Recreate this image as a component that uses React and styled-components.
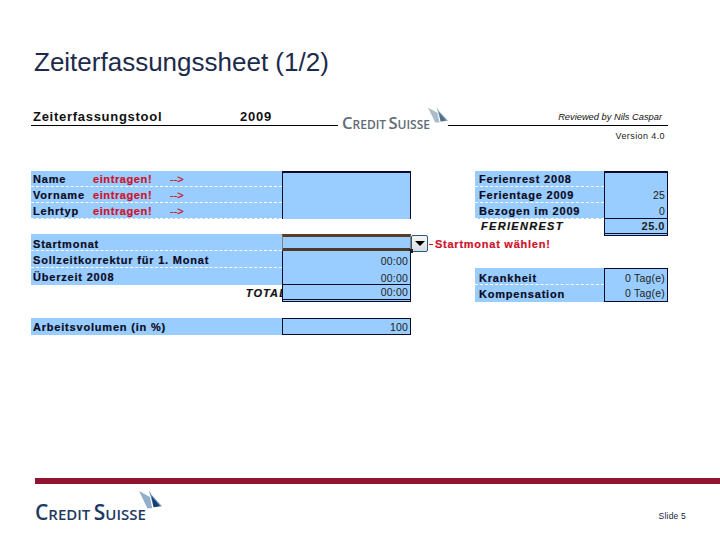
import React from 'react';
import styled, { createGlobalStyle } from 'styled-components';

const GlobalStyle = createGlobalStyle`
  html, body {
    margin: 0;
    padding: 0;
    background: #fff;
  }
`;

const Page = styled.div`
  width: 720px;
  height: 540px;
  overflow: hidden;
  display: flex;
  flex-direction: column;
  font-family: "Liberation Sans", Arial, sans-serif;
`;

const Title = styled.h1`
  margin: 0;
  padding: 48px 0 0 34px;
  height: 59px;
  box-sizing: content-box;
  font-size: 26px;
  line-height: 28px;
  font-weight: 400;
  color: #1c2b4a;
`;

const Sheet = styled.div`
  margin-left: 31px;
  width: 637px;
  height: 371px;
  display: flex;
  flex-direction: column;
`;

const SheetHeader = styled.div`
  height: 64px;
  display: flex;
  align-items: flex-start;
`;

const HeaderPart = styled.div`
  width: ${p => p.$width}px;
  height: 17px;
  border-bottom: 1px solid #000;
  display: flex;
  align-items: flex-end;
  padding: 0 ${p => p.$pad || 0}px 1px 2px;
  box-sizing: content-box;
`;

const ToolName = styled.span`
  font-size: 13px;
  font-weight: 700;
  line-height: 15px;
  letter-spacing: 0.72px;
  color: #111;
  width: 207px;
`;

const Year = styled.span`
  font-size: 13px;
  font-weight: 700;
  line-height: 15px;
  letter-spacing: 0.8px;
  color: #111;
`;

const HeaderRight = styled.div`
  margin-left: auto;
  width: 220px;
  display: flex;
  flex-direction: column;
  align-items: flex-end;
`;

const Reviewed = styled.div`
  width: 100%;
  box-sizing: border-box;
  height: 19px;
  border-bottom: 1px solid #000;
  padding: 4px 6px 0 0;
  text-align: right;
  font-size: 9.3px;
  line-height: 12px;
  font-style: italic;
  color: #111;
`;

const Version = styled.div`
  padding: 4px 3px 0 0;
  font-size: 9px;
  line-height: 12px;
  letter-spacing: 0.4px;
  color: #222;
`;

const LogoWrap = styled.div`
  position: relative;
  flex: none;
  box-sizing: border-box;
  width: ${p => p.$width}px;
  height: ${p => p.$height}px;
  padding-left: ${p => p.$pad}px;
  display: flex;
  align-items: flex-end;
`;

const LogoText = styled.span`
  font-family: "Open Sans", "Liberation Sans", sans-serif;
  font-size: ${p => p.$size}px;
  font-weight: 600;
  line-height: 1;
  font-variant: small-caps;
  word-spacing: -2px;
  white-space: nowrap;
  color: ${p => p.$color};
`;

const Sail = styled.svg`
  position: absolute;
  right: 0;
  top: 0;
`;

const Logo = ({ width, height, pad, size, color, sailWidth, sailHeight, faded }) => (
  <LogoWrap $width={width} $height={height} $pad={pad}>
    <LogoText $size={size} $color={color}>Credit Suisse</LogoText>
    <Sail width={sailWidth} height={sailHeight} viewBox="0 0 66 55" preserveAspectRatio="none">
      <path d="M0 3 L31 20 L38 53 L24 53 Z" fill={faded ? '#a9bcc9' : '#93aec9'} />
      <path d="M28 0 L36 14 L66 47 L42 50 Z" fill={faded ? '#8aa3b4' : '#6f93b8'} />
      <path d="M36 18 L60 46 L42 50 Z" fill={faded ? '#4f6f86' : '#123d73'} />
    </Sail>
  </LogoWrap>
);

const Columns = styled.div`
  display: flex;
  gap: 64px;
  align-items: flex-start;
`;

const LeftColumn = styled.div`
  width: 380px;
  display: flex;
  flex-direction: column;
`;

const RightColumn = styled.div`
  width: 193px;
  display: flex;
  flex-direction: column;
`;

const Block = styled.div`
  margin-top: ${p => p.$top || 0}px;
  display: flex;
  flex-direction: column;
`;

const Row = styled.div`
  position: relative;
  height: ${p => p.$height || 16}px;
  display: grid;
  grid-template-columns: ${p => p.$label}px 1fr;
`;

const Label = styled.div`
  background: #99ccff;
  border-bottom: ${p => (p.$dashed ? '1px dashed #fff' : '0')};
  box-sizing: border-box;
  padding-left: ${p => p.$pad ?? 2}px;
  padding-top: ${p => p.$shift || 0}px;
  display: flex;
  align-items: center;
  font-size: 11px;
  font-weight: 700;
  letter-spacing: 0.8px;
  -webkit-text-stroke: 0.2px currentColor;
  white-space: nowrap;
  color: #0a0a1e;
`;

const LabelName = styled.span`
  width: 60px;
`;

const Hint = styled.span`
  color: #d0112b;
  letter-spacing: 0.6px;
  width: 77px;
`;

const Arrow = styled.span`
  color: #d0112b;
  font-weight: 400;
  letter-spacing: 0;
`;

const TotalLabel = styled.div`
  text-align: right;
  overflow: hidden;
  font-size: 11px;
  font-weight: 700;
  font-style: italic;
  line-height: 16px;
  letter-spacing: 1.1px;
  -webkit-text-stroke: 0.2px currentColor;
  color: #111;
  white-space: nowrap;
`;

const TotalName = styled.span`
  display: inline-block;
  transform: translateX(5px);
`;

const Cell = styled.div`
  background: #99ccff;
  box-sizing: border-box;
  border-left: 1px solid #0a0a2a;
  border-right: 1px solid #0a0a2a;
  border-top: ${p => (p.$top ? `${p.$top}px solid #0a0a2a` : '0')};
  border-bottom: ${p => p.$bottom || '0'};
  padding-right: 2px;
  padding-top: ${p => p.$shift || 0}px;
  display: flex;
  align-items: center;
  justify-content: flex-end;
  font-size: ${p => (p.$bold ? 11 : 10.5)}px;
  letter-spacing: ${p => (p.$bold ? 0.5 : 0.2)}px;
  color: #222;
  font-weight: ${p => (p.$bold ? 700 : 400)};
`;

const ActiveCell = styled.div`
  background: #99ccff;
  box-sizing: border-box;
  border-top: 3px solid #5a3d28;
  border-bottom: 3px solid #4a3a2a;
  border-left: 1px solid #8a8070;
  border-right: 1px solid #8a8070;
`;

const DropButton = styled.div`
  position: absolute;
  left: 380px;
  top: 1px;
  width: 17px;
  height: 17px;
  box-sizing: border-box;
  border: 1px solid #2d5680;
  border-radius: 2px;
  background: linear-gradient(#f6f6f6, #d8dde2);
  display: flex;
  align-items: center;
  justify-content: center;
`;

const DropArrow = styled.span`
  width: 0;
  height: 0;
  border-left: 5px solid transparent;
  border-right: 5px solid transparent;
  border-top: 5px solid #000;
`;

const HandleDot = styled.span`
  position: absolute;
  left: 378px;
  top: 15px;
  width: 4px;
  height: 4px;
  background: #222;
`;

const Prompt = styled.span`
  position: absolute;
  left: 398px;
  top: 4px;
  display: flex;
  align-items: center;
  gap: 2px;
  font-size: 11px;
  line-height: 13px;
  font-weight: 700;
  letter-spacing: 0.75px;
  -webkit-text-stroke: 0.2px currentColor;
  white-space: nowrap;
  color: #d0112b;
`;

const PromptTick = styled.i`
  display: block;
  width: 4px;
  height: 1px;
  background: #d0112b;
`;

const FerienLabel = styled.div`
  padding-left: 6px;
  font-size: 11px;
  font-weight: 700;
  font-style: italic;
  line-height: 15px;
  letter-spacing: 1.3px;
  -webkit-text-stroke: 0.2px currentColor;
  color: #111;
`;

const Footer = styled.div`
  flex: 1;
  display: flex;
  flex-direction: column;
`;

const Rule = styled.div`
  margin-left: 35px;
  height: 6px;
  background: #8e1430;
`;

const FooterRow = styled.div`
  padding: 6px 34px 0 35px;
  display: flex;
  align-items: flex-start;
  justify-content: space-between;
`;

const SlideNo = styled.span`
  margin-top: 21px;
  font-size: 8.5px;
  line-height: 10px;
  letter-spacing: 0.2px;
  color: #14263f;
`;

const BORDER = '1px solid #0a0a2a';
const DOUBLE = '3px double #0a0a2a';

const identity = [
  { name: 'Name', top: 2 },
  { name: 'Vorname' },
  { name: 'Lehrtyp' },
];

const vacation = [
  { label: 'Ferienrest 2008', top: 2 },
  { label: 'Ferientage 2009', value: '25' },
  { label: 'Bezogen im 2009', value: '0' },
];

export default function App() {
  return (
    <Page>
      <GlobalStyle />
      <Title>Zeiterfassungssheet (1/2)</Title>
      <Sheet>
        <SheetHeader>
          <HeaderPart $width={305}>
            <ToolName>Zeiterfassungstool</ToolName>
            <Year>2009</Year>
          </HeaderPart>
          <Logo width={110} height={25} pad={4} size={16.6} color="#5f6b76" sailWidth={20} sailHeight={16} faded />
          <HeaderRight>
            <Reviewed>Reviewed by Nils Caspar</Reviewed>
            <Version>Version 4.0</Version>
          </HeaderRight>
        </SheetHeader>

        <Columns>
          <LeftColumn>
            <Block>
              {identity.map(row => (
                <Row key={row.name} $label={251}>
                  <Label $dashed>
                    <LabelName>{row.name}</LabelName>
                    <Hint>eintragen!</Hint>
                    <Arrow>--&gt;</Arrow>
                  </Label>
                  <Cell $top={row.top} />
                </Row>
              ))}
            </Block>

            <Block $top={15}>
              <Row $height={17} $label={251}>
                <Label $dashed $shift={3}>Startmonat</Label>
                <ActiveCell />
                <DropButton><DropArrow /></DropButton>
                <HandleDot />
                <Prompt><PromptTick />Startmonat wählen!</Prompt>
              </Row>
              <Row $height={17} $label={251}>
                <Label $dashed $shift={2}>Sollzeitkorrektur für 1. Monat</Label>
                <Cell $shift={3}>00:00</Cell>
              </Row>
              <Row $height={17} $label={251}>
                <Label>Überzeit 2008</Label>
                <Cell $shift={3} $bottom={BORDER}>00:00</Cell>
              </Row>
              <Row $height={17} $label={251}>
                <TotalLabel><TotalName>TOTAL</TotalName></TotalLabel>
                <Cell $bottom={DOUBLE}>00:00</Cell>
              </Row>
            </Block>

            <Block $top={16}>
              <Row $height={17} $label={251}>
                <Label>Arbeitsvolumen (in %)</Label>
                <Cell $top={1} $bottom={BORDER}>100</Cell>
              </Row>
            </Block>
          </LeftColumn>

          <RightColumn>
            <Block>
              {vacation.map(row => (
                <Row key={row.label} $label={129}>
                  <Label $dashed $pad={4}>{row.label}</Label>
                  <Cell $top={row.top} $bottom={row.value === '0' ? BORDER : undefined}>{row.value}</Cell>
                </Row>
              ))}
              <Row $height={17} $label={129}>
                <FerienLabel>FERIENREST</FerienLabel>
                <Cell $bold $bottom={DOUBLE}>25.0</Cell>
              </Row>
            </Block>

            <Block $top={32}>
              <Row $height={17} $label={129}>
                <Label $dashed $pad={4} $shift={3}>Krankheit</Label>
                <Cell $top={1} $shift={2}>0 Tag(e)</Cell>
              </Row>
              <Row $height={17} $label={129}>
                <Label $pad={4}>Kompensation</Label>
                <Cell $bottom={BORDER}>0 Tag(e)</Cell>
              </Row>
            </Block>
          </RightColumn>
        </Columns>
      </Sheet>

      <Footer>
        <Rule />
        <FooterRow>
          <Logo width={127} height={33} pad={0} size={21} color="#1e3a5f" sailWidth={23} sailHeight={19} />
          <SlideNo>Slide 5</SlideNo>
        </FooterRow>
      </Footer>
    </Page>
  );
}
